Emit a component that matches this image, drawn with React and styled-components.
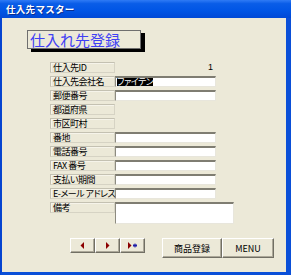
import React from 'react'
import styled, { createGlobalStyle } from 'styled-components'

const GlobalStyle = createGlobalStyle`
    html, body {
        margin: 0;
        padding: 0;
        background: #ece9d8;
    }
    * {
        box-sizing: border-box;
    }
`

const jp = `"MS UI Gothic", "Noto Sans CJK JP", "Liberation Sans", sans-serif`

const Window = styled.div`
    width: 291px;
    height: 275px;
    display: flex;
    flex-direction: column;
    background: #0a4fd8;
    border-left: 2px solid #0644d0;
    border-right: 5px solid #0a4fd8;
    border-bottom: 3px solid #0a4fd8;
    font-family: ${jp};
`

const TitleBar = styled.div`
    height: 18px;
    margin-left: -2px;
    margin-right: -5px;
    padding-left: 6px;
    display: flex;
    align-items: center;
    background: linear-gradient(
        to bottom,
        #2f7bf5 0%,
        #0a5de8 20%,
        #0055e5 60%,
        #0049d6 100%
    );
    color: #fff;
    font-size: 9.5px;
    font-weight: 700;
    letter-spacing: 0.3px;
    text-shadow: 1px 1px 0 #0a2f8f;
`

const Body = styled.div`
    flex: 1;
    background: #ece9d8;
    display: flex;
    flex-direction: column;
    align-items: flex-start;
`

const Heading = styled.div`
    margin: 12px 0 0 25px;
    width: 114px;
    height: 19px;
    border: 1px solid #6f6f6f;
    box-shadow: 4px 3px 0 #000;
    background: #ece9d8;
    color: #4040f4;
    font-size: 15px;
    line-height: 17px;
    padding-left: 2px;
    white-space: nowrap;
`

const Form = styled.div`
    margin: 13px 0 0 48px;
    display: flex;
    flex-direction: column;
    gap: 3px;
`

const Row = styled.div`
    display: flex;
    align-items: flex-start;
    height: ${(p) => p.$h || 11}px;
`

const Label = styled.div`
    width: 65px;
    height: 11px;
    border: 1px solid #d6d3c4;
    border-top-color: #c4c1b2;
    border-left-color: #c4c1b2;
    box-shadow: inset 1px 1px 0 #f6f4ea;
    font-size: 9px;
    line-height: 9px;
    padding-left: 2px;
    color: #000;
    white-space: nowrap;
    font-feature-settings: 'palt';
    letter-spacing: -0.5px;
`

const Field = styled.div`
    width: ${(p) => p.$w || 101}px;
    height: ${(p) => p.$h || 11}px;
    background: #fff;
    border-top: 2px solid #7f7d72;
    border-left: 1px solid #8d8b80;
    border-right: 1px solid #e8e6dc;
    border-bottom: 1px solid #e8e6dc;
    font-size: 9px;
    line-height: 8px;
    padding-left: 1px;
    white-space: nowrap;
    overflow: hidden;
`

const Selected = styled.span`
    background: #000;
    color: #fff;
    font-feature-settings: 'palt';
    letter-spacing: -0.5px;
`

const Value = styled.div`
    width: 101px;
    height: 11px;
    text-align: right;
    font-family: 'Liberation Sans', sans-serif;
    font-size: 9px;
    line-height: 11px;
    padding-right: 3px;
`

const ButtonRow = styled.div`
    margin: 14px 0 0 68px;
    display: flex;
    align-items: flex-start;
    gap: 17px;
`

const NavGroup = styled.div`
    display: flex;
`

const Button = styled.button`
    width: ${(p) => p.$w}px;
    height: ${(p) => p.$h}px;
    padding: 0;
    margin: 0;
    background: #ece9d8;
    border: 1px solid;
    border-color: #fff #716f64 #716f64 #fff;
    box-shadow: inset -1px -1px 0 #aca899;
    display: flex;
    align-items: center;
    justify-content: center;
    font-family: ${jp};
    font-size: 9px;
    color: #000;
`

const Prev = () => (
    <svg width="5" height="7" viewBox="0 0 5 7">
        <path d="M4 0 L4 7 L0.5 3.5 Z" fill="#8b0000" />
    </svg>
)

const Next = () => (
    <svg width="5" height="7" viewBox="0 0 5 7">
        <path d="M1 0 L1 7 L4.5 3.5 Z" fill="#8b0000" />
    </svg>
)

const NewRec = () => (
    <svg width="11" height="7" viewBox="0 0 11 7">
        <path d="M1 0 L1 7 L4.5 3.5 Z" fill="#8b0000" />
        <path d="M6.5 2 L9.5 5 M9.5 2 L6.5 5 M8 1.5 L8 5.5 M6 3.5 L10 3.5" stroke="#1c1ca8" strokeWidth="1" />
    </svg>
)

const rows = [
    { label: '郵便番号', field: true },
    { label: '都道府県' },
    { label: '市区町村' },
    { label: '番地', field: true },
    { label: '電話番号', field: true },
    { label: 'FAX 番号', field: true },
    { label: '支払い期間', field: true },
    { label: 'E-メール アドレス', field: true },
]

export default function App() {
    return (
        <Window>
            <GlobalStyle />
            <TitleBar>仕入先マスター</TitleBar>
            <Body>
                <Heading>仕入れ先登録</Heading>
                <Form>
                    <Row>
                        <Label>仕入先ID</Label>
                        <Value>1</Value>
                    </Row>
                    <Row>
                        <Label>仕入先会社名</Label>
                        <Field>
                            <Selected>ファイテン</Selected>
                        </Field>
                    </Row>
                    {rows.map((r) => (
                        <Row key={r.label}>
                            <Label>{r.label}</Label>
                            {r.field && <Field />}
                        </Row>
                    ))}
                    <Row $h={22}>
                        <Label>備考</Label>
                        <Field $w={119} $h={22} />
                    </Row>
                </Form>
                <ButtonRow>
                    <NavGroup>
                        <Button $w={25} $h={15}>
                            <Prev />
                        </Button>
                        <Button $w={25} $h={15}>
                            <Next />
                        </Button>
                        <Button $w={25} $h={15}>
                            <NewRec />
                        </Button>
                    </NavGroup>
                    <NavGroup>
                        <Button $w={60} $h={20}>商品登録</Button>
                        <Button $w={52} $h={20}>MENU</Button>
                    </NavGroup>
                </ButtonRow>
            </Body>
        </Window>
    )
}
